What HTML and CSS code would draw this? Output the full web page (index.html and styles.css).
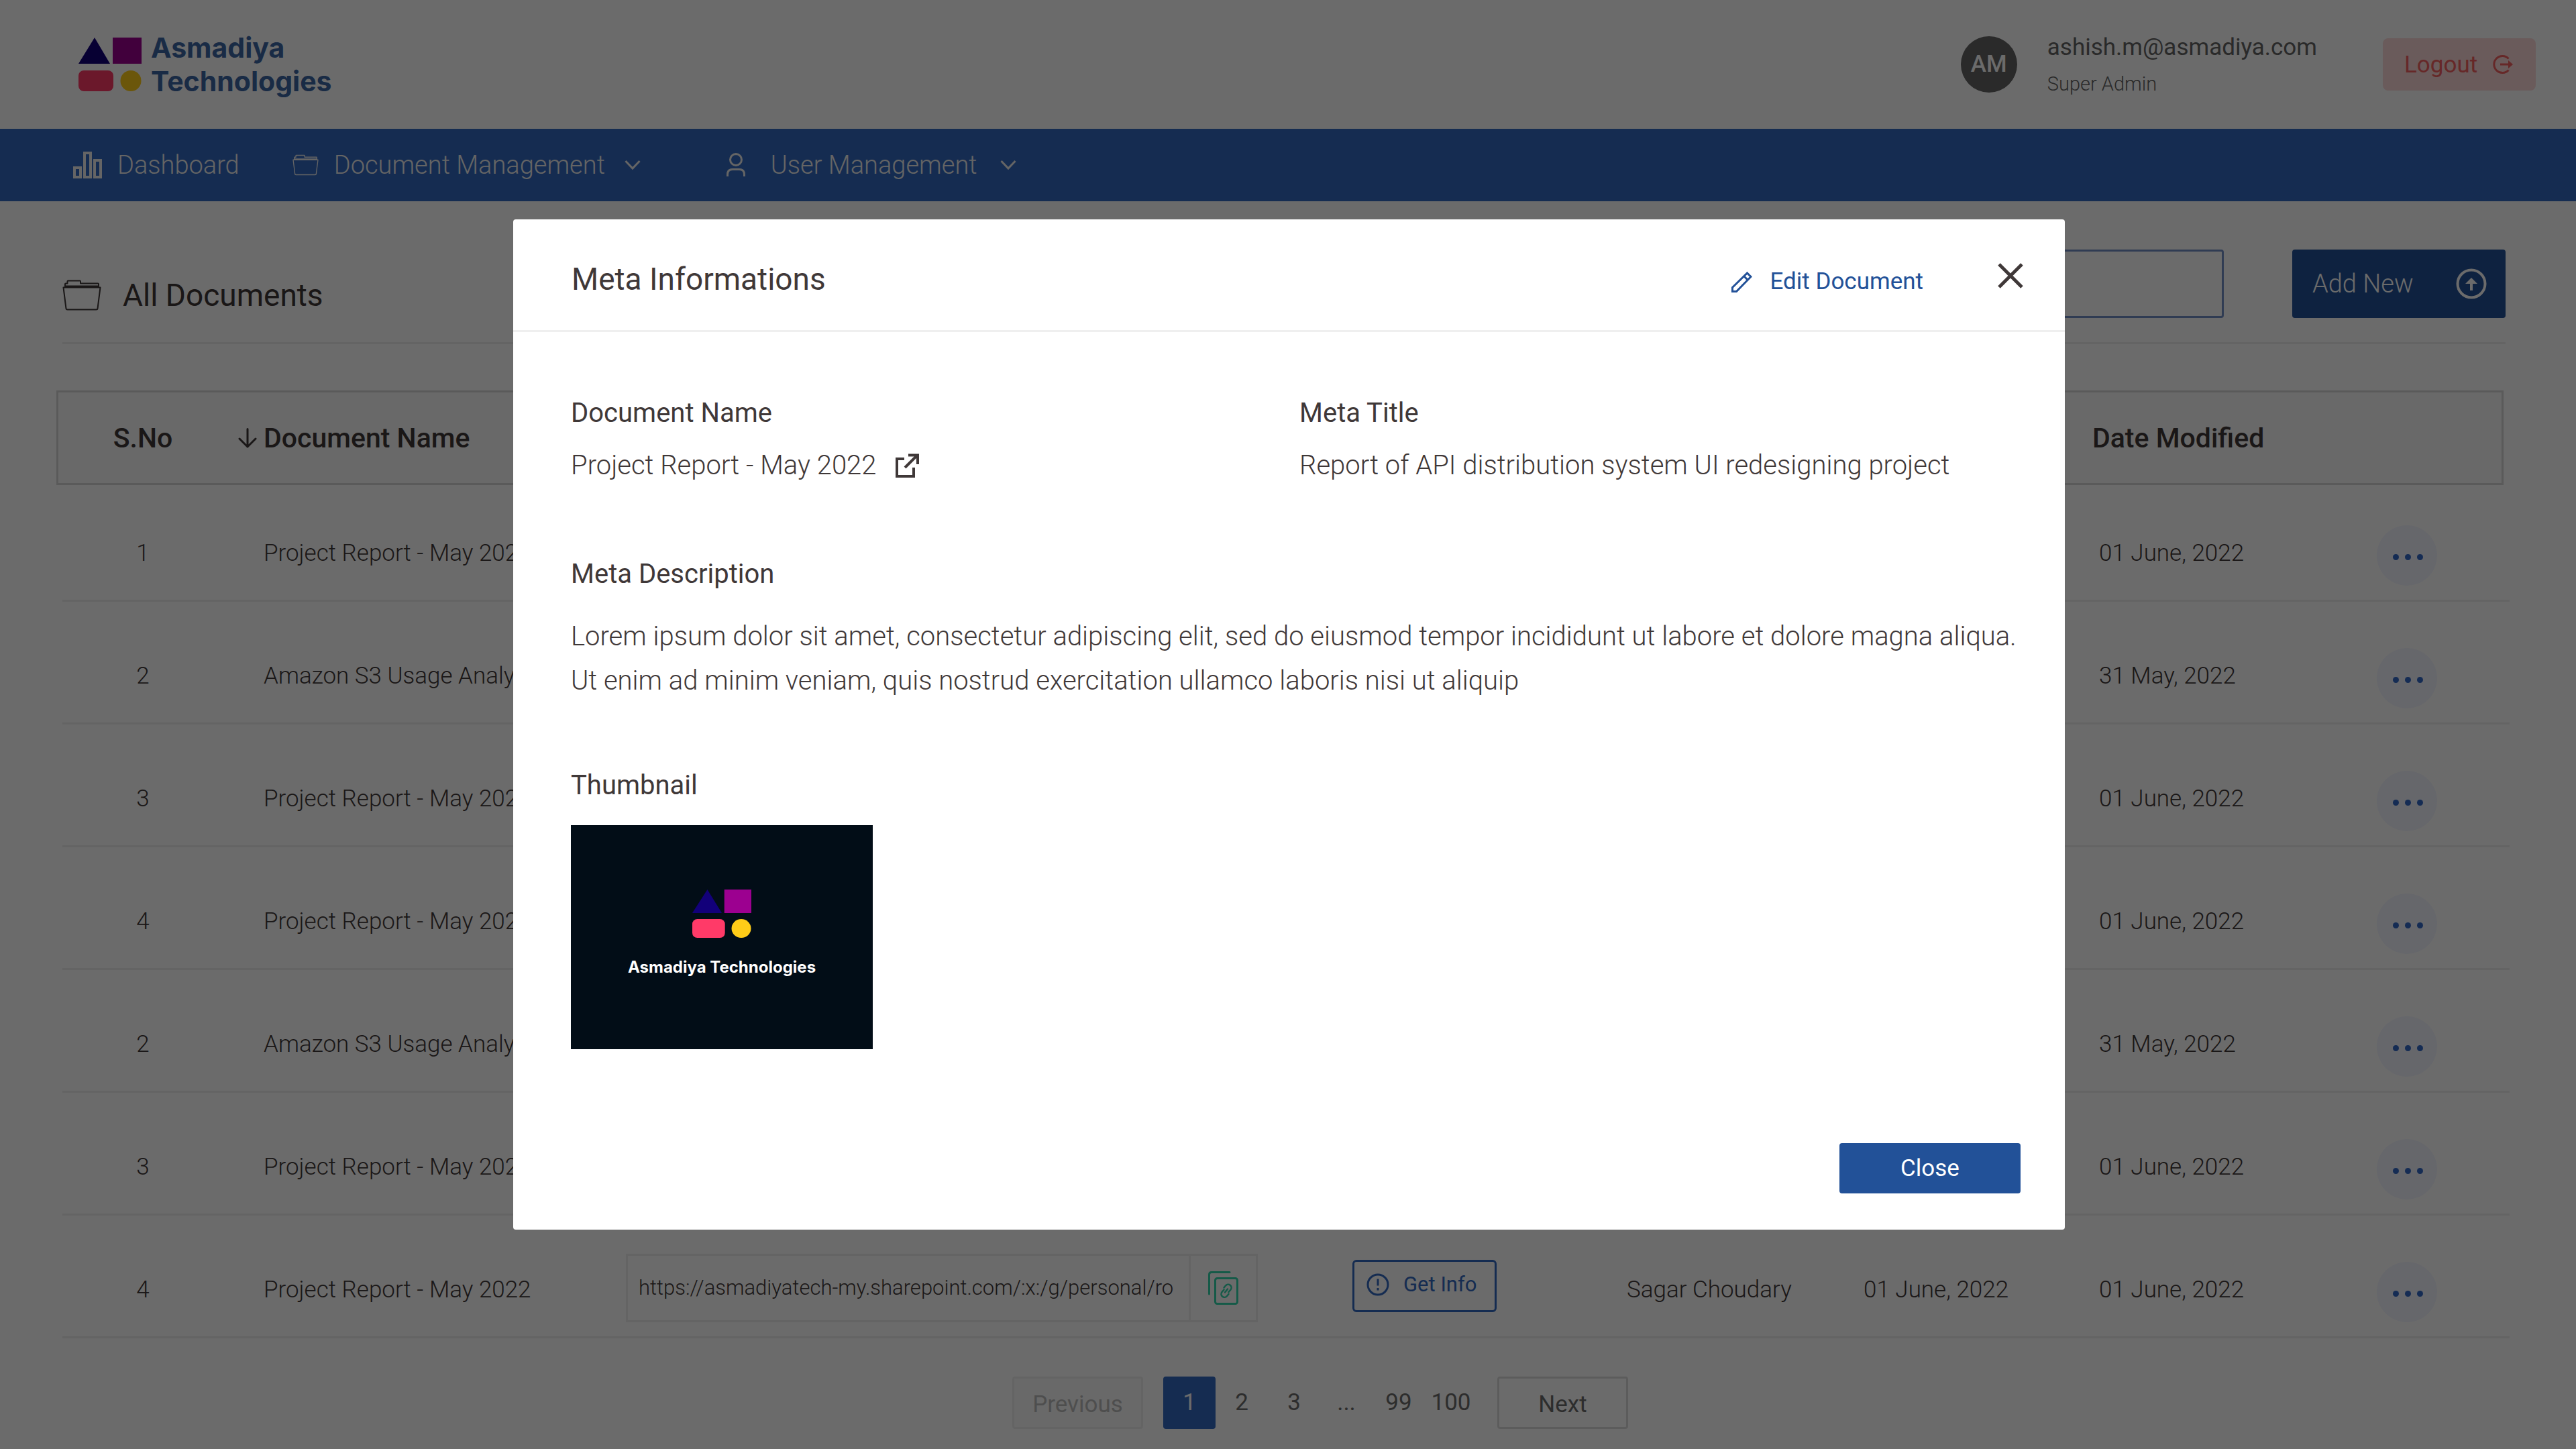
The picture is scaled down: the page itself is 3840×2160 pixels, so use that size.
FILE: index.html
```html
<!DOCTYPE html>
<html lang="en">
<head>
<meta charset="utf-8">
<title>All Documents - Asmadiya Technologies</title>
<meta name="viewport" content="width=device-width, initial-scale=1">
<link rel="stylesheet" href="styles.css">
</head>
<body>
<svg class="defs" width="0" height="0" aria-hidden="true">
  <symbol id="logo" viewBox="0 0 94 80" preserveAspectRatio="none">
    <path fill="#12007a" d="M24 0L47 39H0z"/>
    <path fill="#9c0090" d="M51 0h43v39H51z"/>
    <rect fill="#ff3a68" y="49" width="52" height="31" rx="8"/>
    <circle fill="#ffcc18" cx="78" cy="64.500" r="15.500"/>
  </symbol>
  <symbol id="folder" viewBox="0 0 58 46">
    <path fill="none" stroke="currentColor" stroke-width="2" stroke-linejoin="round" d="M1.500 11.500h55L52.500 43q-.2 1.500-2 1.500h-43q-1.800 0-2-1.500zM4 11.500V6.500q0-1 1-1h2.500V2.500q0-1 1-1H26q1 0 1 1v3h26q1 0 1 1v5M4 9.500h50"/>
  </symbol>
  <symbol id="chevron" viewBox="0 0 24 16">
    <path fill="none" stroke="currentColor" stroke-width="3" d="M1.500 2L12 13 22.500 2"/>
  </symbol>
</svg>

<header class="topbar">
  <a class="brand" href="#">
    <svg class="brand-mark" aria-hidden="true"><use href="#logo"/></svg>
    <span class="brand-name">Asmadiya<br>Technologies</span>
  </a>
  <div class="account">
    <span class="avatar">AM</span>
    <div class="account-text">
      <span class="email">ashish.m@asmadiya.com</span>
      <span class="role">Super Admin</span>
    </div>
    <button class="logout" type="button">Logout
      <svg width="34" height="30" viewBox="0 0 34 30" fill="none" aria-hidden="true"><path stroke="currentColor" stroke-width="3" d="M25.500 6.500A12.500 12.500 0 1 0 25.500 23.500M13 15h13"/><path fill="currentColor" d="M25 9l7 6-7 6z"/></svg>
    </button>
  </div>
</header>

<nav class="nav">
  <a class="nav-item" href="#">
    <svg width="43" height="40" viewBox="0 0 43 40" fill="none" aria-hidden="true"><path stroke="currentColor" stroke-width="4" d="M2 24h9v14H2zM17 2h9v36h-9zM32 13h9v25h-9z"/></svg>
    Dashboard
  </a>
  <button class="nav-item" type="button">
    <svg width="39" height="32" aria-hidden="true"><use href="#folder"/></svg>
    Document Management
    <svg class="nav-chevron" width="24" height="16" aria-hidden="true"><use href="#chevron"/></svg>
  </button>
  <button class="nav-item nav-user" type="button">
    <svg width="28" height="36" viewBox="0 0 28 36" fill="none" aria-hidden="true"><path stroke="currentColor" stroke-width="3" d="M14 1.500a8.500 8.500 0 0 1 0 17a8.500 8.500 0 0 1 0-17zM1.500 35v-3q0-7.500 7.500-7.500h10q7.500 0 7.500 7.500v3"/></svg>
    User Management
    <svg class="nav-chevron" width="24" height="16" aria-hidden="true"><use href="#chevron"/></svg>
  </button>
</nav>

<main class="page">
  <div class="toolbar">
    <h1 class="page-title">
      <svg width="58" height="46" aria-hidden="true"><use href="#folder"/></svg>
      All Documents
    </h1>
    <input class="search" type="search" aria-label="Search documents">
    <button class="add-new" type="button">Add New
      <svg width="46" height="46" viewBox="0 0 46 46" fill="none" aria-hidden="true"><circle cx="23" cy="23" r="20.500" stroke="currentColor" stroke-width="4"/><path stroke="currentColor" stroke-width="4" d="M23 33V20"/><path fill="currentColor" d="M14 23l9-9 9 9z"/></svg>
    </button>
  </div>

  <table class="docs">
    <thead>
      <tr>
        <th class="num">S.No</th>
        <th class="name"><svg width="28" height="30" viewBox="0 0 28 30" fill="none" aria-hidden="true"><path stroke="currentColor" stroke-width="3" stroke-linecap="round" stroke-linejoin="round" d="M14 1.500V28M2 16l12 12 12-12"/></svg>Document Name</th>
        <th></th><th></th><th></th><th></th>
        <th class="modified">Date Modified</th>
        <th></th>
      </tr>
    </thead>
    <tbody>
      <tr><td class="num">1</td><td class="name">Project Report - May 2022</td><td></td><td></td><td></td><td></td><td class="modified">01 June, 2022</td><td class="actions"><button class="more" type="button" aria-label="More"><i></i><i></i><i></i></button></td></tr>
      <tr><td class="num">2</td><td class="name">Amazon S3 Usage Analysis</td><td></td><td></td><td></td><td></td><td class="modified">31 May, 2022</td><td class="actions"><button class="more" type="button" aria-label="More"><i></i><i></i><i></i></button></td></tr>
      <tr><td class="num">3</td><td class="name">Project Report - May 2022</td><td></td><td></td><td></td><td></td><td class="modified">01 June, 2022</td><td class="actions"><button class="more" type="button" aria-label="More"><i></i><i></i><i></i></button></td></tr>
      <tr><td class="num">4</td><td class="name">Project Report - May 2022</td><td></td><td></td><td></td><td></td><td class="modified">01 June, 2022</td><td class="actions"><button class="more" type="button" aria-label="More"><i></i><i></i><i></i></button></td></tr>
      <tr><td class="num">2</td><td class="name">Amazon S3 Usage Analysis</td><td></td><td></td><td></td><td></td><td class="modified">31 May, 2022</td><td class="actions"><button class="more" type="button" aria-label="More"><i></i><i></i><i></i></button></td></tr>
      <tr><td class="num">3</td><td class="name">Project Report - May 2022</td><td></td><td></td><td></td><td></td><td class="modified">01 June, 2022</td><td class="actions"><button class="more" type="button" aria-label="More"><i></i><i></i><i></i></button></td></tr>
      <tr>
        <td class="num">4</td>
        <td class="name">Project Report - May 2022</td>
        <td>
          <div class="link-box">
            <input class="link-url" type="text" readonly aria-label="Document link" value="https://asmadiyatech-my.sharepoint.com/:x:/g/personal/ro">
            <button class="link-copy" type="button" aria-label="Copy link">
              <svg width="46" height="50" viewBox="0 0 46 50" fill="none" stroke="currentColor" stroke-width="3" stroke-linecap="round" aria-hidden="true"><path d="M32 1.500H5q-3.500 0-3.500 3.500v29"/><rect x="10.500" y="10.500" width="33" height="38" rx="3"/><path stroke-width="2.500" d="M23.500 24.500l2.500-3a4.800 4.800 0 0 1 7.500 6l-3 3.500M30.500 34l-2.500 3a4.800 4.800 0 0 1-7.500-6l3-3.500M25 31.500l4-5"/></svg>
            </button>
          </div>
        </td>
        <td class="info">
          <button class="get-info" type="button">
            <svg width="34" height="34" viewBox="0 0 34 34" fill="none" stroke="currentColor" stroke-width="3" aria-hidden="true"><circle cx="17" cy="17" r="15"/><path d="M17 8.500v10M17 22v3.500"/></svg>
            Get Info
          </button>
        </td>
        <td>Sagar Choudary</td>
        <td>01 June, 2022</td>
        <td class="modified">01 June, 2022</td>
        <td class="actions"><button class="more" type="button" aria-label="More"><i></i><i></i><i></i></button></td>
      </tr>
    </tbody>
  </table>

  <div class="pagination">
    <button class="step" type="button" disabled>Previous</button>
    <div class="pages">
      <a class="page-link current" href="#" aria-current="page">1</a>
      <a class="page-link" href="#">2</a>
      <a class="page-link" href="#">3</a>
      <span class="page-link">...</span>
      <a class="page-link" href="#">99</a>
      <a class="page-link" href="#">100</a>
    </div>
    <button class="step" type="button">Next</button>
  </div>
</main>

<div class="backdrop">
  <section class="modal" role="dialog" aria-modal="true" aria-labelledby="modal-title">
    <header class="modal-head">
      <h2 class="modal-title" id="modal-title">Meta Informations</h2>
      <button class="edit" type="button">
        <svg width="31" height="31" viewBox="0 0 31 31" fill="none" stroke="currentColor" stroke-width="3" aria-hidden="true"><path d="M1.500 23.500L23.500 2l5.500 5.500L7.500 29.500h-6zM18.500 6.500l6 6"/></svg>
        Edit Document
      </button>
      <button class="dismiss" type="button" aria-label="Dismiss">
        <svg width="38" height="38" viewBox="0 0 38 38" fill="none" aria-hidden="true"><path stroke="currentColor" stroke-width="5" d="M2 2l34 34M36 2L2 36"/></svg>
      </button>
    </header>
    <div class="modal-body">
      <div class="fields">
        <div class="field">
          <h3 class="label">Document Name</h3>
          <p class="value with-icon">Project Report - May 2022
            <a href="#" aria-label="Open document"><svg width="36" height="36" viewBox="0 0 36 36" fill="none" stroke="currentColor" stroke-width="4" aria-hidden="true"><path d="M14 8H3v26h25V21M20 2.500h14V16M33 3L15 21"/></svg></a>
          </p>
        </div>
        <div class="field">
          <h3 class="label">Meta Title</h3>
          <p class="value">Report of API distribution system UI redesigning project</p>
        </div>
      </div>
      <div class="description">
        <h3 class="label">Meta Description</h3>
        <p class="value">Lorem ipsum dolor sit amet, consectetur adipiscing elit, sed do eiusmod tempor incididunt ut labore et dolore magna aliqua.<br>Ut enim ad minim veniam, quis nostrud exercitation ullamco laboris nisi ut aliquip</p>
      </div>
      <div class="preview">
        <h3 class="label">Thumbnail</h3>
        <div class="thumb">
          <svg class="thumb-mark" aria-hidden="true"><use href="#logo"/></svg>
          <span class="thumb-name">Asmadiya Technologies</span>
        </div>
      </div>
      <div class="modal-actions">
        <button class="close" type="button">Close</button>
      </div>
    </div>
  </section>
</div>
</body>
</html>
```
FILE: styles.css
```css
* {
  box-sizing: border-box;
}

body {
  margin: 0;
  min-height: 100vh;
  background: #fff;
  color: #3f3838;
  font-family: Roboto, "Liberation Sans", sans-serif;
  font-size: 35px;
  font-weight: 300;
}

h1, h2, h3, p {
  margin: 0;
  font-weight: 400;
}

button, input {
  margin: 0;
  padding: 0;
  border: 0;
  background: none;
  color: inherit;
  font: inherit;
}

a {
  color: inherit;
  text-decoration: none;
}

svg {
  display: block;
  flex: none;
}

.defs {
  position: absolute;
}

/* Top bar */
.topbar {
  display: flex;
  align-items: center;
  justify-content: space-between;
  height: 192px;
  padding: 0 60px 0 117px;
}

.brand {
  display: flex;
  align-items: center;
  gap: 14px;
}

.brand-mark {
  width: 94px;
  height: 80px;
}

.brand-name {
  color: #3d66a5;
  font-family: Inter, "Open Sans", sans-serif;
  font-size: 41px;
  font-weight: 700;
  line-height: 50px;
}

.account {
  display: flex;
  align-items: center;
  color: #646464;
}

.avatar {
  width: 84px;
  height: 84px;
  margin-right: 45px;
  border-radius: 50%;
  background: #646464;
  color: #fff;
  font-weight: 500;
  line-height: 84px;
  text-align: center;
}

.account-text {
  display: flex;
  flex-direction: column;
  gap: 10px;
  margin-right: 98px;
}

.email {
  font-weight: 400;
  line-height: 48px;
}

.role {
  font-size: 29px;
  line-height: 40px;
}

.logout {
  display: flex;
  align-items: center;
  justify-content: space-between;
  width: 228px;
  height: 78px;
  padding: 0 32px;
  border-radius: 8px;
  background: #fcdada;
  color: #f25f5f;
  font-weight: 400;
}

/* Navigation */
.nav {
  display: flex;
  align-items: center;
  gap: 79px;
  height: 108px;
  padding: 0 109px;
  background: #3269c1;
  color: #f0f0f0;
  font-size: 38px;
}

.nav-item {
  display: flex;
  align-items: center;
  gap: 23px;
}

.nav-user {
  gap: 38px;
  margin-left: 49px;
}

.nav-chevron {
  margin-left: 6px;
}

.nav-user .nav-chevron {
  margin-left: -4px;
}

/* Page */
.page {
  padding: 72px 99px 30px 84px;
}

.toolbar {
  display: flex;
  align-items: flex-end;
  margin: 0 6px 0 9px;
  padding-bottom: 36px;
  border-bottom: 3px solid #eee;
}

.page-title {
  display: flex;
  align-items: center;
  gap: 32px;
  margin-right: auto;
  font-size: 46px;
  line-height: 68px;
}

.search {
  width: 900px;
  height: 102px;
  margin-right: 102px;
  padding: 0 30px;
  border: 3px solid #728fc6;
  border-radius: 4px;
}

.add-new {
  display: flex;
  align-items: center;
  justify-content: space-between;
  width: 318px;
  height: 102px;
  padding: 0 28px 0 30px;
  border-radius: 4px;
  background: #225198;
  color: #fff;
  font-size: 38px;
}

/* Documents table */
.docs {
  display: block;
  margin-top: 69px;
}

.docs thead,
.docs tbody {
  display: block;
}

.docs thead {
  margin-right: 9px;
}

.docs tbody {
  margin-left: 9px;
}

.docs tr {
  display: grid;
  grid-template-columns: 240fr 600fr 1083fr 409fr 353fr 341fr 424fr 198px;
}

.docs thead tr {
  grid-template-columns: 240fr 600fr 1083fr 409fr 353fr 341fr 424fr 186px;
  align-items: center;
  height: 141px;
  padding-left: 6px;
  border: 3px solid #d6d6d6;
  background: #fafafa;
}

.docs tbody tr {
  height: 183px;
  padding-top: 57px;
  border-bottom: 3px solid #eee;
}

.docs tbody tr:first-child {
  height: 174px;
  padding-top: 48px;
}

.docs th,
.docs td {
  padding: 0;
  text-align: left;
}

.docs th {
  font-size: 41px;
  font-weight: 500;
}

.docs td {
  line-height: 108px;
  white-space: nowrap;
}

.docs .num {
  text-align: center;
}

.docs .name {
  padding-left: 60px;
}

.docs th.name {
  display: flex;
  align-items: center;
  gap: 10px;
  padding-left: 22px;
}

.docs td.modified {
  padding-left: 10px;
}

.docs .info {
  padding-top: 9px;
}

.docs .actions {
  padding-top: 12px;
}

.more {
  display: flex;
  align-items: center;
  justify-content: center;
  gap: 9px;
  width: 90px;
  height: 90px;
  padding-top: 4px;
  padding-left: 2px;
  border-radius: 50%;
  background: #f3f5ff;
}

.more i {
  width: 9px;
  height: 9px;
  border-radius: 50%;
  background: #3269c8;
}

.link-box {
  display: flex;
  width: 942px;
  max-width: 100%;
  height: 102px;
  border: 3px solid #efefef;
}

.link-url {
  flex: 1;
  min-width: 0;
  padding-left: 16px;
  font-size: 31px;
}

.link-copy {
  display: flex;
  align-items: center;
  justify-content: center;
  width: 100px;
  border-left: 3px solid #efefef;
  color: #32d6ab;
}

.get-info {
  display: flex;
  align-items: center;
  gap: 21px;
  width: 215px;
  height: 78px;
  padding: 0 0 4px 18px;
  border: 3px solid #3269c1;
  border-radius: 6px;
  color: #3269c1;
  font-size: 31px;
  font-weight: 400;
  line-height: 40px;
}

/* Pagination */
.pagination {
  display: flex;
  justify-content: center;
  gap: 30px;
  margin-top: 57px;
  padding-left: 111px;
  color: #6b6b6b;
  font-weight: 400;
  line-height: 78px;
}

.pages {
  display: flex;
}

.page-link {
  width: 78px;
  height: 78px;
  border-radius: 4px;
  text-align: center;
}

.page-link.current {
  background: #3269c1;
  color: #fff;
}

.step {
  width: 195px;
  height: 78px;
  border: 3px solid #dcdcdc;
  border-radius: 4px;
}

.step:disabled {
  border-color: #efefef;
  background: #fafafa;
  color: #bababa;
}

/* Dialog */
.backdrop {
  position: fixed;
  inset: 0;
  padding: 327px 762px 0 765px;
  background: rgba(0, 0, 0, 0.58);
}

.modal {
  border-radius: 4px;
  background: #fff;
}

.modal-head {
  display: flex;
  align-items: flex-start;
  height: 168px;
  padding: 57px 62px 0 87px;
  border-bottom: 3px solid #efefef;
}

.modal-title {
  margin-right: auto;
  font-size: 46px;
  line-height: 64px;
}

.edit {
  display: flex;
  align-items: center;
  gap: 26px;
  margin-right: 111px;
  color: #225198;
  font-weight: 400;
  line-height: 72px;
}

.dismiss {
  padding-top: 8px;
}

.modal-body {
  padding: 94px 66px 54px 86px;
}

.fields {
  display: grid;
  grid-template-columns: 1086fr 1075fr;
}

.label {
  font-size: 40px;
  line-height: 54px;
}

.value {
  margin-top: 18px;
  font-size: 40px;
  font-weight: 300;
  line-height: 66px;
}

.with-icon {
  display: flex;
  align-items: center;
  gap: 28px;
}

.description {
  margin-top: 102px;
}

.description .value {
  margin-top: 33px;
}

.preview {
  margin-top: 96px;
}

.thumb {
  display: flex;
  flex-direction: column;
  align-items: center;
  gap: 24px;
  width: 450px;
  height: 334px;
  margin-top: 32px;
  padding-top: 96px;
  background: #020d17;
}

.thumb-mark {
  width: 88px;
  height: 72px;
}

.thumb-name {
  color: #fff;
  font-family: Inter, "Open Sans", sans-serif;
  font-size: 24px;
  font-weight: 700;
  line-height: 40px;
}

.modal-actions {
  display: flex;
  justify-content: flex-end;
  margin-top: 140px;
}

.close {
  width: 270px;
  height: 75px;
  border-radius: 4px;
  background: #225198;
  color: #fff;
  font-weight: 400;
}
```
